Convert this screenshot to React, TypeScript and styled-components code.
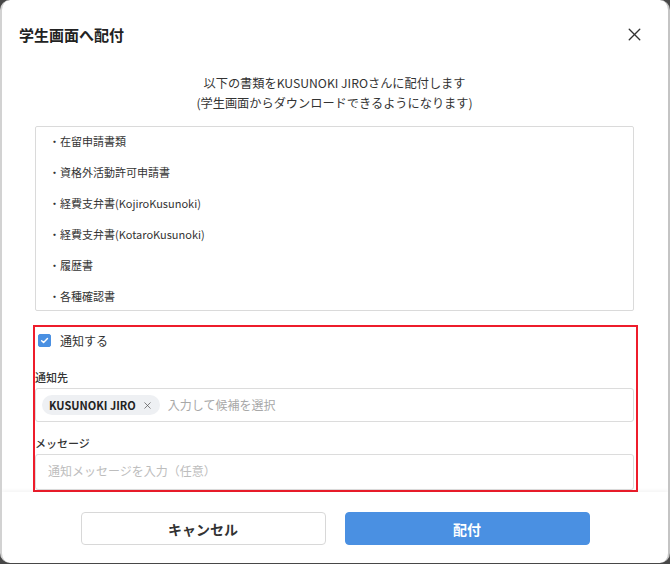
import React, { useState } from 'react';
import styled, { createGlobalStyle } from 'styled-components';
import { X } from 'lucide-react';

const GlobalStyle = createGlobalStyle`
  html, body {
    margin: 0;
    padding: 0;
    background: #474747;
  }
  body {
    font-family: "Noto Sans CJK JP", "Noto Sans", sans-serif;
    color: #333;
  }
`;

const Modal = styled.div`
  width: 670px;
  height: 563px;
  box-sizing: border-box;
  background: #fff;
  border-radius: 10px;
  border-left: 2px solid #d2d2d2;
  border-right: 2px solid #c4c4c4;
  display: flex;
  flex-direction: column;
  overflow: hidden;
`;

const Header = styled.div`
  height: 68px;
  flex-shrink: 0;
  display: flex;
  align-items: center;
  justify-content: space-between;
  padding: 0 22px 0 17px;
`;

const Title = styled.h2`
  margin: 0;
  font-size: 15px;
  font-weight: 700;
  color: #222;
`;

const CloseButton = styled.button`
  width: 24px;
  height: 24px;
  padding: 0;
  border: none;
  background: transparent;
  color: #333;
  cursor: pointer;
  display: flex;
  align-items: center;
  justify-content: center;
`;

const Body = styled.div`
  flex: 1;
  padding: 5px 34px 0 33px;
`;

const Lead = styled.p`
  margin: 0;
  text-align: center;
  font-size: 12.2px;
  line-height: 20px;
  color: #333;
`;

const DocList = styled.ul`
  list-style: none;
  margin: 13px 0 0;
  padding: 0 13px;
  height: 185px;
  box-sizing: border-box;
  overflow: hidden;
  border: 1px solid #dadada;
  border-radius: 2px;
`;

const DocItem = styled.li`
  font-size: 11px;
  line-height: 28px;
  padding-bottom: 3px;
  color: #333;
`;

const NotifySection = styled.section`
  margin: 14px -4px 0 -2px;
  padding: 0 2px 0 0;
  border: 2px solid #ee1c2b;
`;

const CheckRow = styled.label`
  height: 26px;
  display: flex;
  align-items: center;
  gap: 9px;
  padding-left: 3px;
  font-size: 12px;
  color: #333;
  cursor: pointer;
`;

const CheckBox = styled.span<{ checked: boolean }>`
  width: 13px;
  height: 13px;
  border-radius: 2px;
  box-sizing: border-box;
  background: ${props => (props.checked ? '#4a90e2' : '#fff')};
  border: 1px solid ${props => (props.checked ? '#4a90e2' : '#bbb')};
  display: flex;
  align-items: center;
  justify-content: center;
`;

const FieldLabel = styled.div<{ gap: number }>`
  margin-top: ${props => props.gap}px;
  font-size: 11px;
  line-height: 16px;
  font-weight: 500;
  color: #333;
`;

const InputBox = styled.div<{ tall?: boolean }>`
  margin-top: 3px;
  height: ${props => (props.tall ? '36px' : '34px')};
  box-sizing: border-box;
  border: 1px solid #dcdcdc;
  border-radius: 3px;
  display: flex;
  align-items: ${props => (props.tall ? 'flex-start' : 'center')};
  padding: ${props => (props.tall ? '6px 6px 0' : '0 6px')};
  gap: 8px;
`;

const Chip = styled.span`
  height: 20px;
  display: inline-flex;
  align-items: center;
  gap: 6px;
  padding: 0 7px;
  border-radius: 10px;
  background: #eef0f3;
  font-size: 11px;
  font-weight: 700;
  color: #222;
`;

const ChipRemove = styled.span`
  display: flex;
  color: #555;
`;

const Placeholder = styled.span<{ light?: boolean }>`
  font-size: 12px;
  line-height: 20px;
  color: ${props => (props.light ? '#bdbdbd' : '#a8a8a8')};
  padding-left: ${props => (props.light ? '6px' : '0')};
`;

const Footer = styled.div`
  flex-shrink: 0;
  position: relative;
  display: flex;
  justify-content: center;
  gap: 19px;
  padding: 20px 0 18px;
  box-shadow: 0 -2px 3px rgba(0, 0, 0, 0.04);
`;

const Button = styled.button<{ primary?: boolean }>`
  width: 245px;
  height: 33px;
  border-radius: 4px;
  font-family: inherit;
  font-size: 14px;
  font-weight: 700;
  cursor: pointer;
  background: ${props => (props.primary ? '#4a90e2' : '#fff')};
  color: ${props => (props.primary ? '#fff' : '#333')};
  border: 1px solid ${props => (props.primary ? '#4a90e2' : '#d8d8d8')};
`;

const documents = [
  '在留申請書類',
  '資格外活動許可申請書',
  '経費支弁書(KojiroKusunoki)',
  '経費支弁書(KotaroKusunoki)',
  '履歴書',
  '各種確認書',
];

const App: React.FC = () => {
  const [notify, setNotify] = useState(true);

  return (
    <>
      <GlobalStyle />
      <Modal>
        <Header>
          <Title>学生画面へ配付</Title>
          <CloseButton aria-label="close">
            <X size={21} strokeWidth={1.6} />
          </CloseButton>
        </Header>

        <Body>
          <Lead>以下の書類をKUSUNOKI JIROさんに配付します</Lead>
          <Lead>(学生画面からダウンロードできるようになります)</Lead>

          <DocList>
            {documents.map(doc => (
              <DocItem key={doc}>・{doc}</DocItem>
            ))}
          </DocList>

          <NotifySection>
            <CheckRow onClick={() => setNotify(!notify)}>
              <CheckBox checked={notify}>
                {notify && (
                  <svg width="9" height="9" viewBox="0 0 10 10">
                    <path d="M1.8 5.2 L4 7.3 L8.3 2.8" fill="none" stroke="#fff" strokeWidth="1.6" strokeLinecap="round" strokeLinejoin="round" />
                  </svg>
                )}
              </CheckBox>
              通知する
            </CheckRow>

            <FieldLabel gap={16}>通知先</FieldLabel>
            <InputBox>
              <Chip>
                KUSUNOKI JIRO
                <ChipRemove>
                  <X size={11} strokeWidth={1.6} />
                </ChipRemove>
              </Chip>
              <Placeholder>入力して候補を選択</Placeholder>
            </InputBox>

            <FieldLabel gap={13}>メッセージ</FieldLabel>
            <InputBox tall>
              <Placeholder light>通知メッセージを入力（任意）</Placeholder>
            </InputBox>
          </NotifySection>
        </Body>

        <Footer>
          <Button>キャンセル</Button>
          <Button primary>配付</Button>
        </Footer>
      </Modal>
    </>
  );
};

export default App;
